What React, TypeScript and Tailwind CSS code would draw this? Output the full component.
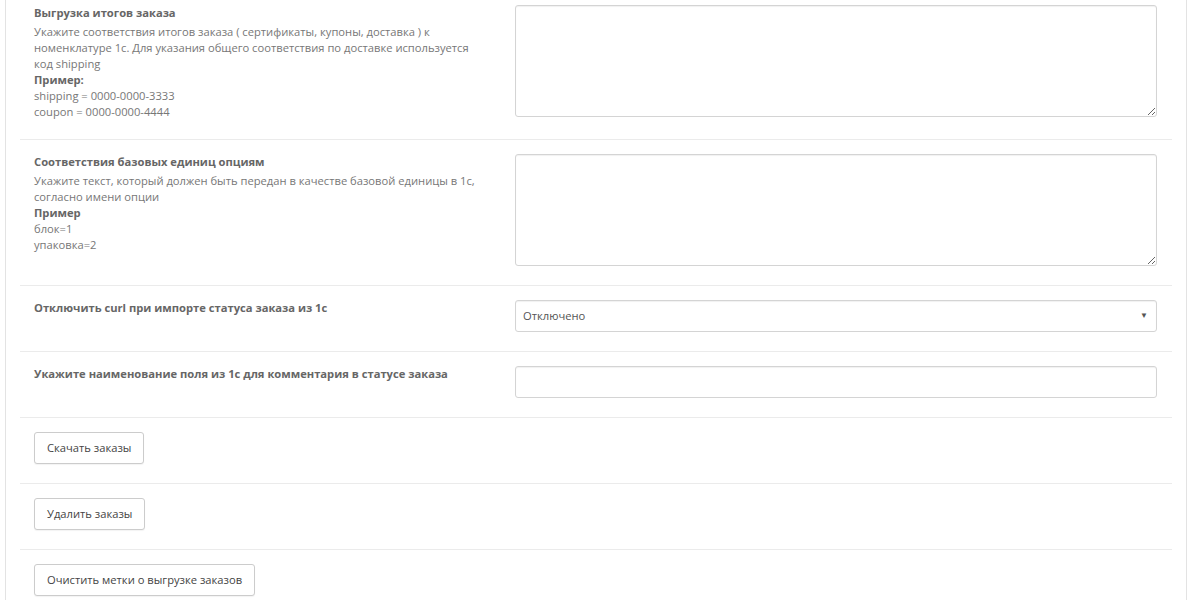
import React from 'react';

const font = { fontFamily: '"Open Sans", "Liberation Sans", sans-serif' };

interface FieldRowProps {
  title: string;
  children?: React.ReactNode;
  control: React.ReactNode;
  first?: boolean;
}

const FieldRow: React.FC<FieldRowProps> = ({ title, children, control, first }) => (
  <div className={`grid grid-cols-[5fr_7fr] border-b border-[#ebebeb] pb-[19px] ${first ? 'pt-[5px]' : 'pt-[14px]'}`}>
    <div className="px-[14px] text-[11.2px] leading-[16px] text-[#777]">
      <div className="font-bold text-[#666]">{title}</div>
      {children && <div className="mt-[3px]">{children}</div>}
    </div>
    <div className="px-[15px]">{control}</div>
  </div>
);

const ButtonRow: React.FC<{ label: string; last?: boolean }> = ({ label, last }) => (
  <div className={`px-[14px] pt-[14px] pb-[19px] ${last ? '' : 'border-b border-[#ebebeb]'}`}>
    <button className="h-[32px] px-[12px] rounded-[3px] border border-[#ccc] bg-white text-[11.2px] text-[#444] shadow-[0_1px_1px_rgba(0,0,0,0.05)]">
      {label}
    </button>
  </div>
);

const textareaCls =
  'block w-full h-[112px] rounded-[3px] border border-[#d4d4d4] bg-white shadow-[inset_0_1px_1px_rgba(0,0,0,0.06)] outline-none';

export default function App() {
  return (
    <div className="w-[1200px] h-[600px] overflow-hidden bg-white" style={font}>
      <div className="ml-[5px] w-[1182px] min-h-[600px] border-x border-[#e3e3e3] px-[14px]">
        <FieldRow
          first
          title="Выгрузка итогов заказа"
          control={<textarea className={textareaCls} />}
        >
          Укажите соответствия итогов заказа ( сертификаты, купоны, доставка ) к номенклатуре 1с. Для указания общего
          соответствия по доставке используется код shipping
          <div className="font-bold text-[#666]">Пример:</div>
          <div>shipping = 0000-0000-3333</div>
          <div>coupon = 0000-0000-4444</div>
        </FieldRow>

        <FieldRow
          title="Соответствия базовых единиц опциям"
          control={<textarea className={textareaCls} />}
        >
          Укажите текст, который должен быть передан в качестве базовой единицы в 1с, согласно имени опции
          <div className="font-bold text-[#666]">Пример</div>
          <div>блок=1</div>
          <div>упаковка=2</div>
        </FieldRow>

        <FieldRow
          title="Отключить curl при импорте статуса заказа из 1с"
          control={
            <div className="relative">
              <select className="block w-full h-[32px] appearance-none rounded-[3px] border border-[#d4d4d4] bg-white pl-[7px] text-[11.2px] text-[#555] outline-none shadow-[inset_0_1px_1px_rgba(0,0,0,0.06)]">
                <option>Отключено</option>
                <option>Включено</option>
              </select>
              <span className="pointer-events-none absolute right-[9px] top-[9px] text-[8px] text-[#555]">▼</span>
            </div>
          }
        />

        <FieldRow
          title="Укажите наименование поля из 1с для комментария в статусе заказа"
          control={
            <input
              type="text"
              className="block w-full h-[32px] rounded-[3px] border border-[#d4d4d4] bg-white px-[8px] text-[11.2px] outline-none shadow-[inset_0_1px_1px_rgba(0,0,0,0.06)]"
            />
          }
        />

        <ButtonRow label="Скачать заказы" />
        <ButtonRow label="Удалить заказы" />
        <ButtonRow label="Очистить метки о выгрузке заказов" last />
      </div>
    </div>
  );
}
